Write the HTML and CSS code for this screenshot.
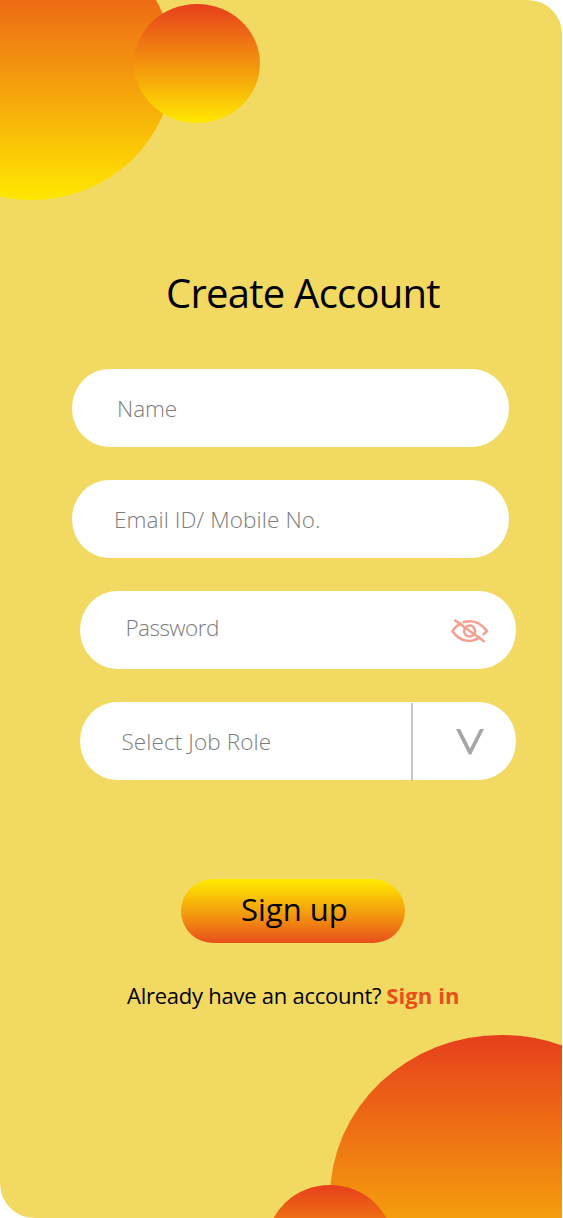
FILE: index.html
```html
<!DOCTYPE html>
<html lang="en">
<head>
<meta charset="utf-8">
<title>Create Account</title>
<link rel="stylesheet" href="styles.css">
</head>
<body>
<main class="screen">
  <div class="bubble bubble-top-large"></div>
  <div class="bubble bubble-top-small"></div>
  <div class="bubble bubble-bottom-large"></div>
  <div class="bubble bubble-bottom-small"></div>

  <h1 class="title">Create Account</h1>
  <form class="form">
    <label class="field field-name"><span class="label">Name</span></label>
    <label class="field field-email"><span class="label">Email ID/ Mobile No.</span></label>
    <label class="field field-password shifted">
      <span class="label">Password</span>
      <svg class="eye" width="40" height="28" viewBox="0 0 40 28" fill="none" stroke="#f4a08f" stroke-width="2.5" stroke-linecap="round" stroke-linejoin="round">
        <path d="M10.5 6.3C7.2 8.2 4.5 10.9 2.5 14C10 25.5 22 26 29.5 20.3"/>
        <path d="M13.5 5.2C22 2.5 30.5 5.5 37 14L33.5 17.3"/>
        <circle cx="19.6" cy="14" r="5.5"/>
        <path d="M5.2 3.5L34 24.3"/>
      </svg>
    </label>
    <label class="field field-role shifted">
      <span class="label">Select Job Role</span>
      <span class="toggle">
        <svg class="chevron" width="28" height="26" viewBox="0 0 28 26" fill="#a6a6a6"><path d="M0 0H4.2L14 19.5L24 0H28L15.2 25.5H12.8Z"/></svg>
      </span>
    </label>
    <button class="submit" type="button">Sign up</button>
  </form>
  <p class="signin"><span class="question">Already have an account?</span><a class="link">Sign in</a></p>
</main>
</body>
</html>
```

FILE: styles.css
```css
* { box-sizing: border-box; }

body {
  margin: 0;
  background: #fff;
  font-family: "Open Sans", "Noto Sans", sans-serif;
}

.screen {
  position: relative;
  width: 562.5px;
  height: 1218px;
  padding-top: 261px;
  overflow: hidden;
  border-radius: 0 34px 0 34px;
  background: #f2d962;
  clip-path: inset(0 0.5px 0 0 round 0 34px 0 34px);
}

/* Decorative gradient bubbles behind the form */
.bubble {
  position: absolute;
  border-radius: 50%;
  background: linear-gradient(#e73f1c, #f3960e 52%, #ffe800);
}
.bubble-top-large { left: -111px; top: -71px; width: 284px; height: 270.5px; }
.bubble-top-small { left: 133.5px; top: 4.4px; width: 126px; height: 119px; }
.bubble-bottom-large { left: 330.4px; top: 1035px; width: 343px; height: 325px; }
.bubble-bottom-small { left: 267px; top: 1185px; width: 126px; height: 119px; }

.title {
  margin: 0;
  padding-left: 166px;
  height: 64px;
  font-size: 40px;
  font-weight: 400;
  letter-spacing: -0.75px;
  line-height: 64px;
  white-space: nowrap;
}

.form {
  display: flex;
  flex-direction: column;
  gap: 33px;
  margin-top: 44px;
  padding-left: 72px;
}

.field {
  display: flex;
  align-items: center;
  width: 436.5px;
  height: 78px;
  border-radius: 37px / 39px;
  background: #fff;
  color: #7c7c7c;
  font-size: 22.5px;
  font-weight: 300;
  letter-spacing: 0.1px;
  line-height: 32px;
  white-space: nowrap;
}
.label { padding-top: 2px; }
.shifted { margin-left: 7.5px; }
.field-name { padding-left: 45px; letter-spacing: -0.1px; }
.field-email { padding-left: 42px; }
.field-password { padding: 0 27px 0 46px; justify-content: space-between; }
.field-password .label { padding-bottom: 7px; letter-spacing: -0.55px; }
.field-role { padding-left: 42px; justify-content: space-between; }
.eye { margin: 2px -1px 0 0; }

.toggle {
  display: flex;
  width: 105.5px;
  height: 78px;
  margin-top: 2px;
  padding: 26px 0 0 43.5px;
  border-left: 2px solid #c6c6c6;
}

.submit {
  width: 224px;
  height: 64px;
  margin: 66px 0 0 109.4px;
  padding: 0 0 4px 2px;
  border: 0;
  border-radius: 32px;
  background: linear-gradient(#ffec00, #f39a0e 55%, #e94e1b);
  color: #000;
  font: 400 31px/60px "Open Sans", "Noto Sans", sans-serif;
}

.signin {
  display: flex;
  gap: 5px;
  margin: 36px 0 0 127px;
  font-size: 22px;
  line-height: 32px;
  white-space: nowrap;
}
.question { letter-spacing: -0.25px; }
.link { color: #e94e1b; font-weight: 700; letter-spacing: 0.1px; }
```
